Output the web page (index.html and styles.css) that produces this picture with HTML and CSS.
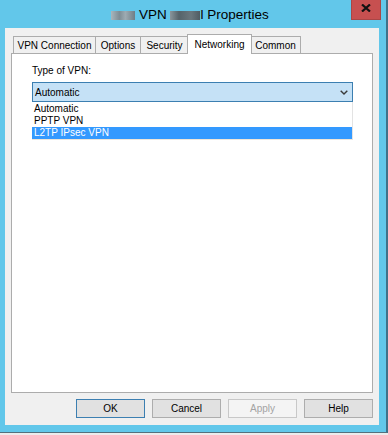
FILE: index.html
```html
<!DOCTYPE html>
<html lang="en">
<head>
    <meta charset="UTF-8">
    <title>VPN Properties</title>
    <link rel="stylesheet" href="styles.css">
</head>
<body>
    <div class="window">
        <div class="titlebar">
            <div class="title"><span class="blur blur-a"></span> VPN <span class="blur blur-b"></span>l Properties</div>
            <div class="close">
                <svg width="10" height="8" viewBox="0 0 10 8">
                    <path d="M1 0.5 L9 7.5 M9 0.5 L1 7.5" stroke="#111" stroke-width="2.2" fill="none"/>
                </svg>
            </div>
        </div>

        <div class="client">
            <div class="tabs">
                <div class="tab tab-vpn">VPN Connection</div>
                <div class="tab tab-options">Options</div>
                <div class="tab tab-security">Security</div>
                <div class="tab tab-networking active">Networking</div>
                <div class="tab tab-common">Common</div>
            </div>

            <div class="panel">
                <div class="field-label">Type of VPN:</div>
                <div class="combo">
                    <div class="combo-box">
                        <span>Automatic</span>
                        <svg width="8" height="5" viewBox="0 0 8 5">
                            <path d="M0.7 0.7 L4 4 L7.3 0.7" stroke="#3a3a3a" stroke-width="1.4" fill="none"/>
                        </svg>
                    </div>
                    <ul class="combo-list">
                        <li>Automatic</li>
                        <li>PPTP VPN</li>
                        <li class="selected">L2TP IPsec VPN</li>
                    </ul>
                </div>
            </div>

            <div class="buttons">
                <div class="btn default">OK</div>
                <div class="btn">Cancel</div>
                <div class="btn disabled">Apply</div>
                <div class="btn">Help</div>
            </div>
        </div>
    </div>
</body>
</html>
```

FILE: styles.css
```css
/* Windows style dialog */
html, body {
    margin: 0;
    height: 100%;
}
body {
    background-color: #ececec;
    font-family: "Liberation Sans", Arial, sans-serif;
    font-size: 10px;
    color: #000;
}
.window {
    box-sizing: border-box;
    width: 388px;
    height: 433px;
    background-color: #62c7ea;
    border-right: 2px solid #3f7189;
    border-bottom: 1px solid #55707d;
    padding: 0 7px 7px 5px;
    display: flex;
    flex-direction: column;
    position: relative;
}
/* Title bar */
.titlebar {
    height: 28px;
    flex-shrink: 0;
    display: flex;
    align-items: center;
    justify-content: center;
    padding-right: 4px;
}
.title {
    font-size: 13.5px;
    color: #000;
    white-space: pre;
}
.blur {
    display: inline-block;
    height: 9px;
    vertical-align: -1px;
}
.blur-a {
    width: 24px;
    background: linear-gradient(90deg, #a9b6bd 0%, #7e8d95 35%, #9eabb2 60%, #6f7e86 100%);
}
.blur-b {
    width: 30px;
    background: linear-gradient(90deg, #8a969c 0%, #55636a 30%, #6a777d 70%, #4f5c63 100%);
}
.close {
    position: absolute;
    top: 0;
    right: 5px;
    width: 30px;
    height: 20px;
    box-sizing: border-box;
    background-color: #c75050;
    border: 1px solid #a94646;
    border-top: none;
    display: flex;
    align-items: center;
    justify-content: center;
    padding-bottom: 3px;
}
/* Client area */
.client {
    flex: 1;
    box-sizing: border-box;
    background-color: #f0f0f0;
    padding: 6px 6px 7px 6px;
    display: flex;
    flex-direction: column;
}
.tabs {
    display: flex;
    align-items: flex-end;
    height: 19px;
    padding-left: 2px;
    flex-shrink: 0;
}
.tab {
    box-sizing: border-box;
    height: 17px;
    border: 1px solid #acacac;
    border-bottom: none;
    background-color: #f0f0f0;
    display: flex;
    align-items: center;
    justify-content: center;
}
.tab-vpn { width: 83px; }
.tab-options { width: 46px; margin-left: -1px; }
.tab-security { width: 49px; margin-left: -1px; }
.tab-networking { width: 61px; }
.tab-common { width: 51px; }
.tab.active {
    width: 65px;
    height: 20px;
    margin: 0 -2px -1px -2px;
    background-color: #fff;
    position: relative;
    z-index: 1;
    padding-bottom: 1px;
}
.panel {
    flex: 1;
    box-sizing: border-box;
    background-color: #fff;
    border: 1px solid #acacac;
    padding: 11px 19px 0 20px;
}
.field-label {
    line-height: 12px;
    margin-bottom: 5px;
}
/* Combo box with open dropdown */
.combo-box {
    box-sizing: border-box;
    height: 20px;
    border: 1px solid #3c7fb1;
    background-color: #c5e1f6;
    display: flex;
    align-items: center;
    justify-content: space-between;
    padding: 0 4px 0 2px;
}
.combo-list {
    list-style: none;
    margin: 0;
    padding: 1px 0 0 0;
    border-right: 1px solid #e3e3e3;
    border-bottom: 1px solid #efe6da;
}
.combo-list li {
    line-height: 12px;
    height: 12px;
    padding-left: 2px;
}
.combo-list li.selected {
    background-color: #3399ff;
    color: #fff;
}
/* Buttons */
.buttons {
    display: flex;
    justify-content: flex-end;
    gap: 7px;
    margin-top: 6px;
    flex-shrink: 0;
}
.btn {
    box-sizing: border-box;
    width: 69px;
    height: 19px;
    border: 1px solid #adadad;
    background-color: #e1e1e1;
    display: flex;
    align-items: center;
    justify-content: center;
}
.btn.default {
    border-color: #3c7fb1;
}
.btn.disabled {
    border-color: #c8c8c8;
    background-color: #f4f4f4;
    color: #a3a3a3;
}
```
